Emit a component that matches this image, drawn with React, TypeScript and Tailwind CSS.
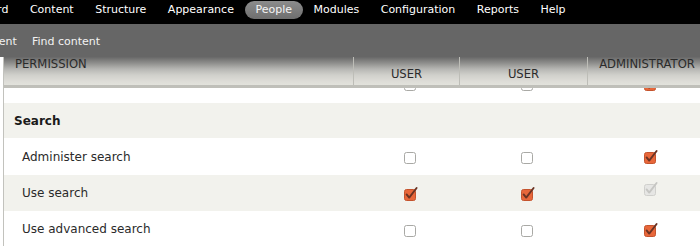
import React from "react";

type Box = "off" | "on" | "dummy";

const NAV = ["Dashboard", "Content", "Structure", "Appearance", "People", "Modules", "Configuration", "Reports", "Help"];
const SHORTCUTS = ["Add content", "Find content"];

const ROWS: { label: string; cells: Box[]; shade: boolean; h: string }[] = [
  { label: "Administer search", cells: ["off", "off", "on"], shade: false, h: "h-[37px]" },
  { label: "Use search", cells: ["on", "on", "dummy"], shade: true, h: "h-[36px]" },
  { label: "Use advanced search", cells: ["off", "off", "on"], shade: false, h: "h-[36px]" },
];

function Checkbox({ state }: { state: Box }) {
  if (state === "off") {
    return (
      <svg width="12" height="12" viewBox="0 0 12 12" className="block">
        <rect x="0.5" y="0.5" width="11" height="11" rx="2" fill="#ffffff" stroke="#a9a9a5" />
      </svg>
    );
  }
  const on = state === "on";
  return (
    <svg width="12" height="12" viewBox="0 0 12 12" className="block overflow-visible">
      <rect x="0.5" y="0.5" width="11" height="11" rx="2" fill={on ? "#e8673a" : "#e6e6e4"} stroke={on ? "#c4532d" : "#d0d0cd"} />
      <path d="M2.6 5.4 L5.2 8.6 L12.6 -1" fill="none" stroke={on ? "#6b3323" : "#c6c6c3"} strokeWidth="1.9" strokeLinecap="round" strokeLinejoin="round" />
    </svg>
  );
}

export default function App() {
  return (
    <div className="w-[700px] h-[246px] overflow-hidden bg-white font-['DejaVu_Sans',sans-serif]">
      {/* toolbar, scrolled so Dashboard / Add content run off the left edge */}
      <div className="h-[24px] bg-black overflow-hidden">
        <ul className="flex -ml-[62px] pt-[1px] whitespace-nowrap">
          {NAV.map((n) => (
            <li
              key={n}
              className={`px-[10.75px] h-[18px] leading-[18px] text-[11px] shrink-0 ${
                n === "People" ? "rounded-full bg-[linear-gradient(to_bottom,#8c8c8c,#6e6e6e)] text-[#f4f4f4]" : "text-white"
              }`}
            >
              {n}
            </li>
          ))}
        </ul>
      </div>
      <div className="h-[33px] bg-[#666666] overflow-hidden">
        <div className="flex gap-[15px] -ml-[50px] pt-[11px] whitespace-nowrap">
          {SHORTCUTS.map((s) => (
            <span key={s} className="text-[11px] leading-[14px] text-[#f2f2f2] shrink-0">{s}</span>
          ))}
        </div>
      </div>

      {/* permissions table */}
      <div className="ml-[3px] w-[703px] border-l border-[#c2c2bd]">
        <div className="relative z-10 h-[31px] grid grid-cols-[350px_106px_128px_1fr] border-b-[3px] border-[#bfbfb9] bg-[linear-gradient(to_bottom,#686868_0px,#8e8e8c_6px,#b6b6b3_12px,#d0d0cb_18px,#dddcd7_24px,#e2e2dc_28px)] text-[11.6px] leading-[14px] text-[#2b2b2b] uppercase">
          <div className="border-r border-[#bdbdb7] pl-[11px]">Permission</div>
          <div className="border-r border-[#bdbdb7] text-center pt-[10px]">User</div>
          <div className="border-r border-[#bdbdb7] text-center pt-[10px]">User</div>
          <div className="text-center">Administrator</div>
        </div>

        <div className="h-[15px] grid grid-cols-[350px_106px_128px_1fr]">
          <div />
          {(["off", "off", "on"] as Box[]).map((c, i) => (
            <div key={i} className="flex justify-center pl-[5px] -mt-[9px]">
              <Checkbox state={c} />
            </div>
          ))}
        </div>

        <div className="h-[35px] flex items-center bg-[#f2f2ed] pl-[10px] text-[12px] font-bold text-[#1a1a1a]">Search</div>

        {ROWS.map((r) => (
          <div key={r.label} className={`${r.h} grid grid-cols-[350px_106px_128px_1fr] ${r.shade ? "bg-[#f2f2ed]" : "bg-white"}`}>
            <div className="flex items-center pl-[18px] text-[12px] text-[#2a2a2a]">{r.label}</div>
            {r.cells.map((c, i) => (
              <div key={i} className={`flex items-center justify-center pl-[5px] ${c === "dummy" ? "-mt-[6px]" : "mt-[3px]"}`}>
                <Checkbox state={c} />
              </div>
            ))}
          </div>
        ))}
      </div>
    </div>
  );
}
